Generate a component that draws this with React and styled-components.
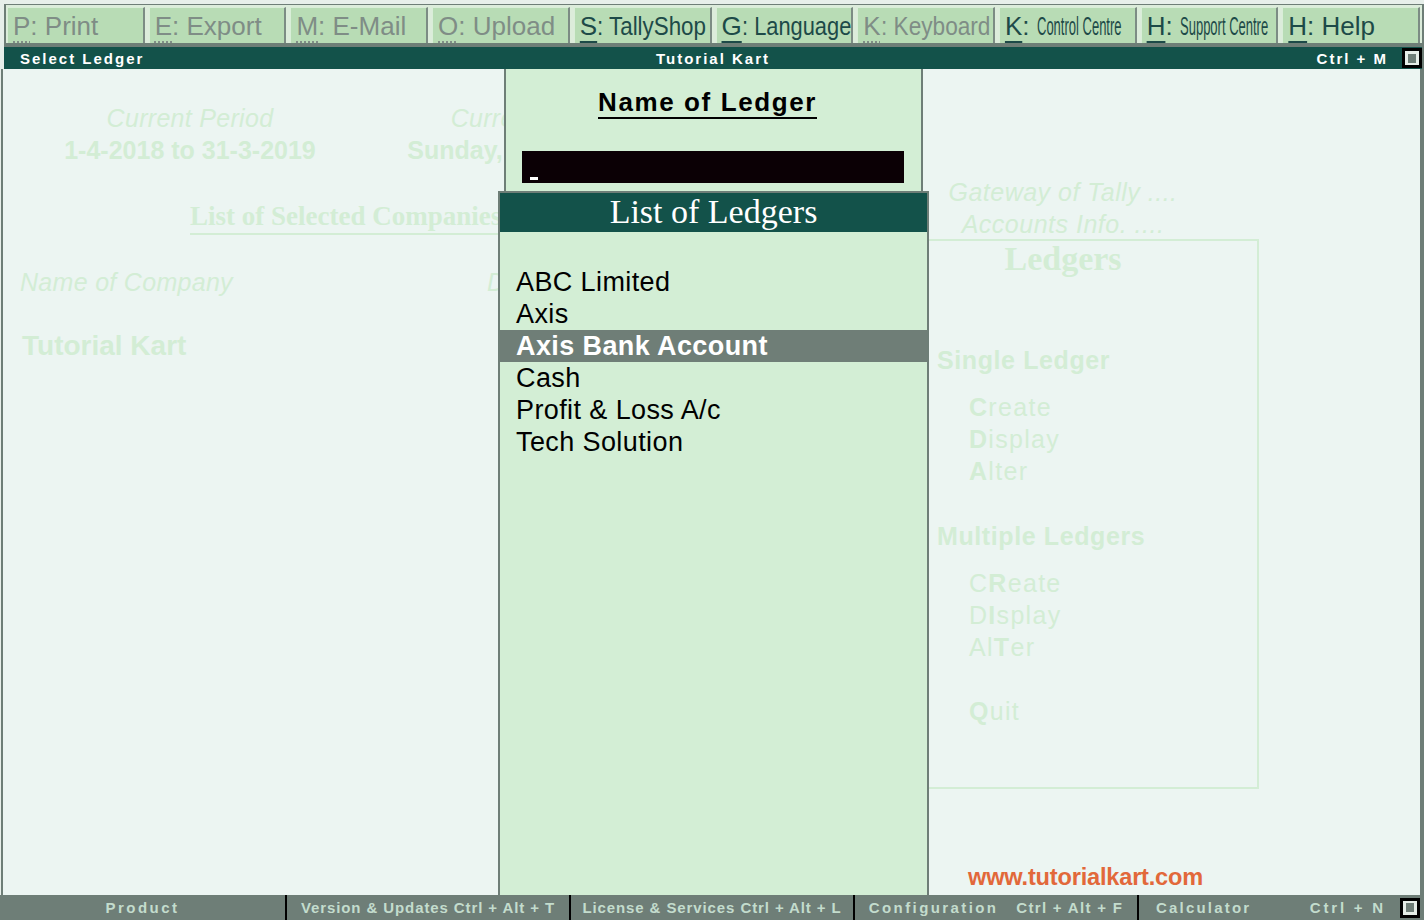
import styled, { createGlobalStyle } from 'styled-components';

const TEAL = '#13524a';
const GREY = '#6e7e77';
const PALE = '#ecf5f2';
const MINT = '#d3eed5';
const FADE = '#d3edd5';

const Global = createGlobalStyle`
  html, body { margin: 0; padding: 0; }
  body {
    background: ${PALE};
    font-family: "Liberation Sans", Arial, sans-serif;
  }
`;

const Screen = styled.div`
  width: 1424px;
  height: 920px;
  display: flex;
  flex-direction: column;
  overflow: hidden;
  background: #e7efea;
`;

// top button strip
const ButtonRow = styled.div`
  display: flex;
  gap: 4px;
  margin: 4px 0 0 4px;
  padding: 2px 2px 0 1px;
  border-top: 1px solid ${GREY};
  border-left: 2px solid ${GREY};
  border-right: 2px solid ${GREY};
  border-bottom: 4px solid ${GREY};
  background: #dcecdb;
`;

const MenuButton = styled.div`
  flex: 1;
  min-width: 0;
  height: 36px;
  box-sizing: border-box;
  padding-left: 5px;
  background: #b8dcb5;
  border-top: 1px solid #d9eed8;
  border-left: 1px solid #d9eed8;
  border-right: 2px solid #7c8c84;
  font-size: 26px;
  line-height: 36px;
  white-space: nowrap;
  overflow: hidden;
  color: ${p => (p.$on ? '#1d4a48' : '#7f8d86')};
`;

const Hot = styled.span`
  text-decoration: underline;
  text-decoration-thickness: 2px;
  text-underline-offset: 6px;
  text-decoration-style: ${p => (p.$on ? 'double' : 'dotted')};
`;

const Squeeze = styled.span`
  display: inline-block;
  transform: scaleX(${p => p.$x});
  transform-origin: left center;
`;

const TitleBar = styled.div`
  height: 22px;
  margin-left: 4px;
  display: grid;
  grid-template-columns: 1fr auto 1fr;
  align-items: center;
  background: ${TEAL};
  border-right: 2px solid ${GREY};
  color: #fff;
  font-weight: bold;
  font-size: 15px;
  letter-spacing: 2px;
`;

const TitleLeft = styled.span`
  padding-left: 16px;
`;

const TitleRight = styled.div`
  justify-self: end;
  display: flex;
  align-items: center;
  gap: 14px;
`;

const CornerBox = styled.span`
  width: 20px;
  height: 20px;
  box-sizing: border-box;
  border: 3px solid #000;
  background: #e6eee8;
  display: flex;
  align-items: center;
  justify-content: center;
  &::after {
    content: '';
    width: 8px;
    height: 9px;
    background: ${GREY};
  }
`;

// main work area
const Main = styled.div`
  position: relative;
  flex: 1;
  display: flex;
  background: ${PALE};
  margin-left: 1px;
  border-left: 2px solid ${GREY};
  border-right: 4px solid ${GREY};
`;

const LeftInfo = styled.div`
  width: 864px;
  padding-top: 33px;
  color: ${FADE};
`;

const PeriodGrid = styled.div`
  display: grid;
  grid-template-columns: 374px 294px;
  text-align: center;
  font-size: 25px;
  line-height: 32px;
`;

const Italic = styled.div`
  font-style: italic;
  letter-spacing: 0.3px;
`;

const Bold = styled.div`
  font-weight: bold;
  font-size: ${p => p.$size || 25}px;
`;

const CompaniesHeading = styled.div`
  display: inline-block;
  margin: 33px 0 0 187px;
  font-family: "Liberation Serif", "Times New Roman", serif;
  font-weight: bold;
  font-size: 27px;
  line-height: 34px;
  border-bottom: 2px solid ${FADE};
  white-space: nowrap;
`;

const CompanyRow = styled.div`
  display: grid;
  grid-template-columns: 467px auto;
  margin-top: ${p => p.$gap}px;
  padding-left: ${p => p.$pad}px;
  font-size: 25px;
  line-height: 32px;
`;

const Gateway = styled.div`
  width: 392px;
  padding-top: 107px;
  color: ${FADE};
  font-size: 25px;
`;

const GatewayTitle = styled.div`
  font-style: italic;
  text-align: center;
  letter-spacing: 0.5px;
  line-height: 32px;
`;

const LedgerBox = styled.div`
  height: 550px;
  margin-top: -1px;
  box-sizing: border-box;
  border: 2px solid ${FADE};
  padding-left: 68px;
`;

const BoxHeading = styled.div`
  margin-left: -68px;
  text-align: center;
  font-family: "Liberation Serif", "Times New Roman", serif;
  font-weight: bold;
  font-size: 34px;
  line-height: 36px;
`;

const GroupHeading = styled.div`
  margin-top: ${p => p.$gap}px;
  font-weight: bold;
  letter-spacing: 0.6px;
  line-height: 32px;
`;

const MenuItem = styled.div`
  margin-top: ${p => p.$gap || 0}px;
  padding-left: 32px;
  letter-spacing: 1.3px;
  line-height: 32px;
  b { font-weight: bold; }
`;

// overlays
const NamePanel = styled.div`
  position: absolute;
  left: 501px;
  top: 0;
  width: 419px;
  height: 123px;
  box-sizing: border-box;
  border-left: 2px solid ${GREY};
  border-right: 2px solid ${GREY};
  background: ${MINT};
  display: flex;
  flex-direction: column;
  align-items: center;
`;

const NameHeading = styled.div`
  margin: 18px 12px 0 0;
  font-weight: bold;
  font-size: 26px;
  letter-spacing: 1.6px;
  line-height: 30px;
  color: #000;
  border-bottom: 2px solid #000;
`;

const InputBar = styled.div`
  align-self: flex-start;
  margin: 32px 0 0 16px;
  width: 382px;
  height: 32px;
  box-sizing: border-box;
  padding: 0 0 3px 8px;
  background: #0b0005;
  display: flex;
  align-items: flex-end;
`;

const Cursor = styled.span`
  width: 8px;
  height: 3px;
  background: #fff;
`;

const ListPanel = styled.div`
  position: absolute;
  left: 495px;
  top: 122px;
  bottom: 0;
  width: 431px;
  box-sizing: border-box;
  border: 2px solid ${GREY};
  border-bottom: none;
  background: ${MINT};
`;

const ListHeader = styled.div`
  height: 39px;
  background: ${TEAL};
  color: #fff;
  text-align: center;
  font-family: "Liberation Serif", "Times New Roman", serif;
  font-size: 34px;
  line-height: 38px;
`;

const List = styled.div`
  padding-top: 34px;
`;

const ListRow = styled.div`
  height: 32px;
  padding-left: 16px;
  font-size: 27px;
  letter-spacing: 0.4px;
  line-height: 32px;
  color: ${p => (p.$active ? '#fff' : '#000')};
  font-weight: ${p => (p.$active ? 'bold' : 'normal')};
  background: ${p => (p.$active ? '#6f7e77' : 'transparent')};
`;

const Watermark = styled.div`
  position: absolute;
  left: 965px;
  top: 795px;
  color: #e2683a;
  font-weight: bold;
  font-size: 23.6px;
  letter-spacing: -0.2px;
  line-height: 26px;
`;

// footer
const Footer = styled.div`
  height: 25px;
  display: flex;
  background: ${GREY};
  color: #c3dccd;
  font-weight: bold;
  font-size: 15px;
  letter-spacing: 0.9px;
  line-height: 25px;
`;

const FootCell = styled.div`
  width: ${p => (p.$w ? `${p.$w}px` : 'auto')};
  flex: ${p => (p.$w ? 'none' : 1)};
  box-sizing: border-box;
  border-left: ${p => (p.$first ? 'none' : '2px solid #000')};
  display: flex;
  align-items: center;
  justify-content: ${p => (p.$spread ? 'space-between' : 'center')};
  gap: ${p => p.$gap || 0}px;
  padding: ${p => (p.$spread ? '0 4px 0 17px' : '0')};
  white-space: nowrap;
  overflow: hidden;
`;

const Spaced = styled.span`
  letter-spacing: ${p => p.$ls}px;
`;

const FootRight = styled.div`
  display: flex;
  align-items: center;
  gap: 14px;
`;

const buttons = [
  { key: 'P', rest: ': Print' },
  { key: 'E', rest: ': Export' },
  { key: 'M', rest: ': E-Mail' },
  { key: 'O', rest: ': Upload' },
  { key: 'S', rest: ': TallyShop', on: true, x: 0.86 },
  { key: 'G', rest: ': Language', on: true, x: 0.84 },
  { key: 'K', rest: ': Keyboard', x: 0.87 },
  { key: 'K', rest: 'Control Centre', on: true, x: 0.5, split: true },
  { key: 'H', rest: 'Support Centre', on: true, x: 0.5, split: true },
  { key: 'H', rest: ': Help', on: true },
];

const ledgers = ['ABC Limited', 'Axis', 'Axis Bank Account', 'Cash', 'Profit & Loss A/c', 'Tech Solution'];

export default function App() {
  return (
    <Screen>
      <Global />
      <ButtonRow>
        {buttons.map((b, i) => (
          <MenuButton key={i} $on={b.on}>
            <Hot $on={b.on}>{b.key}</Hot>
            {b.split ? (
              <>
                {': '}
                <Squeeze $x={b.x}>{b.rest}</Squeeze>
              </>
            ) : b.x ? (
              <Squeeze $x={b.x}>{b.rest}</Squeeze>
            ) : (
              b.rest
            )}
          </MenuButton>
        ))}
      </ButtonRow>

      <TitleBar>
        <TitleLeft>Select Ledger</TitleLeft>
        <span>Tutorial Kart</span>
        <TitleRight>
          <span>Ctrl + M</span>
          <CornerBox />
        </TitleRight>
      </TitleBar>

      <Main>
        <LeftInfo>
          <PeriodGrid>
            <Italic>Current Period</Italic>
            <Italic>Current Date</Italic>
            <Bold>1-4-2018 to 31-3-2019</Bold>
            <Bold>Sunday, 1 Apr, 2018</Bold>
          </PeriodGrid>
          <CompaniesHeading>List of Selected Companies</CompaniesHeading>
          <CompanyRow $gap={31} $pad={17}>
            <Italic>Name of Company</Italic>
            <Italic>Date of Last Entry</Italic>
          </CompanyRow>
          <CompanyRow $gap={32} $pad={19}>
            <Bold $size={28}>Tutorial Kart</Bold>
            <span />
          </CompanyRow>
        </LeftInfo>

        <Gateway>
          <GatewayTitle>Gateway of Tally ....</GatewayTitle>
          <GatewayTitle>Accounts Info. ....</GatewayTitle>
          <LedgerBox>
            <BoxHeading>Ledgers</BoxHeading>
            <GroupHeading $gap={67}>Single Ledger</GroupHeading>
            <MenuItem $gap={15}><b>C</b>reate</MenuItem>
            <MenuItem><b>D</b>isplay</MenuItem>
            <MenuItem><b>A</b>lter</MenuItem>
            <GroupHeading $gap={33}>Multiple Ledgers</GroupHeading>
            <MenuItem $gap={15}>C<b>R</b>eate</MenuItem>
            <MenuItem>D<b>I</b>splay</MenuItem>
            <MenuItem>Al<b>T</b>er</MenuItem>
            <MenuItem $gap={32}><b>Q</b>uit</MenuItem>
          </LedgerBox>
        </Gateway>

        <NamePanel>
          <NameHeading>Name of Ledger</NameHeading>
          <InputBar>
            <Cursor />
          </InputBar>
        </NamePanel>

        <ListPanel>
          <ListHeader>List of Ledgers</ListHeader>
          <List>
            {ledgers.map(name => (
              <ListRow key={name} $active={name === 'Axis Bank Account'}>
                {name}
              </ListRow>
            ))}
          </List>
        </ListPanel>

        <Watermark>www.tutorialkart.com</Watermark>
      </Main>

      <Footer>
        <FootCell $w={285} $first>
          <Spaced $ls={2.5}>Product</Spaced>
        </FootCell>
        <FootCell $w={284}>Version &amp; Updates Ctrl + Alt + T</FootCell>
        <FootCell $w={284}>License &amp; Services Ctrl + Alt + L</FootCell>
        <FootCell $w={284} $gap={18}>
          <Spaced $ls={2.4}>Configuration</Spaced>
          <Spaced $ls={1.3}>Ctrl + Alt + F</Spaced>
        </FootCell>
        <FootCell $spread>
          <Spaced $ls={2.2}>Calculator</Spaced>
          <FootRight>
            <Spaced $ls={2.8}>Ctrl + N</Spaced>
            <CornerBox />
          </FootRight>
        </FootCell>
      </Footer>
    </Screen>
  );
}
